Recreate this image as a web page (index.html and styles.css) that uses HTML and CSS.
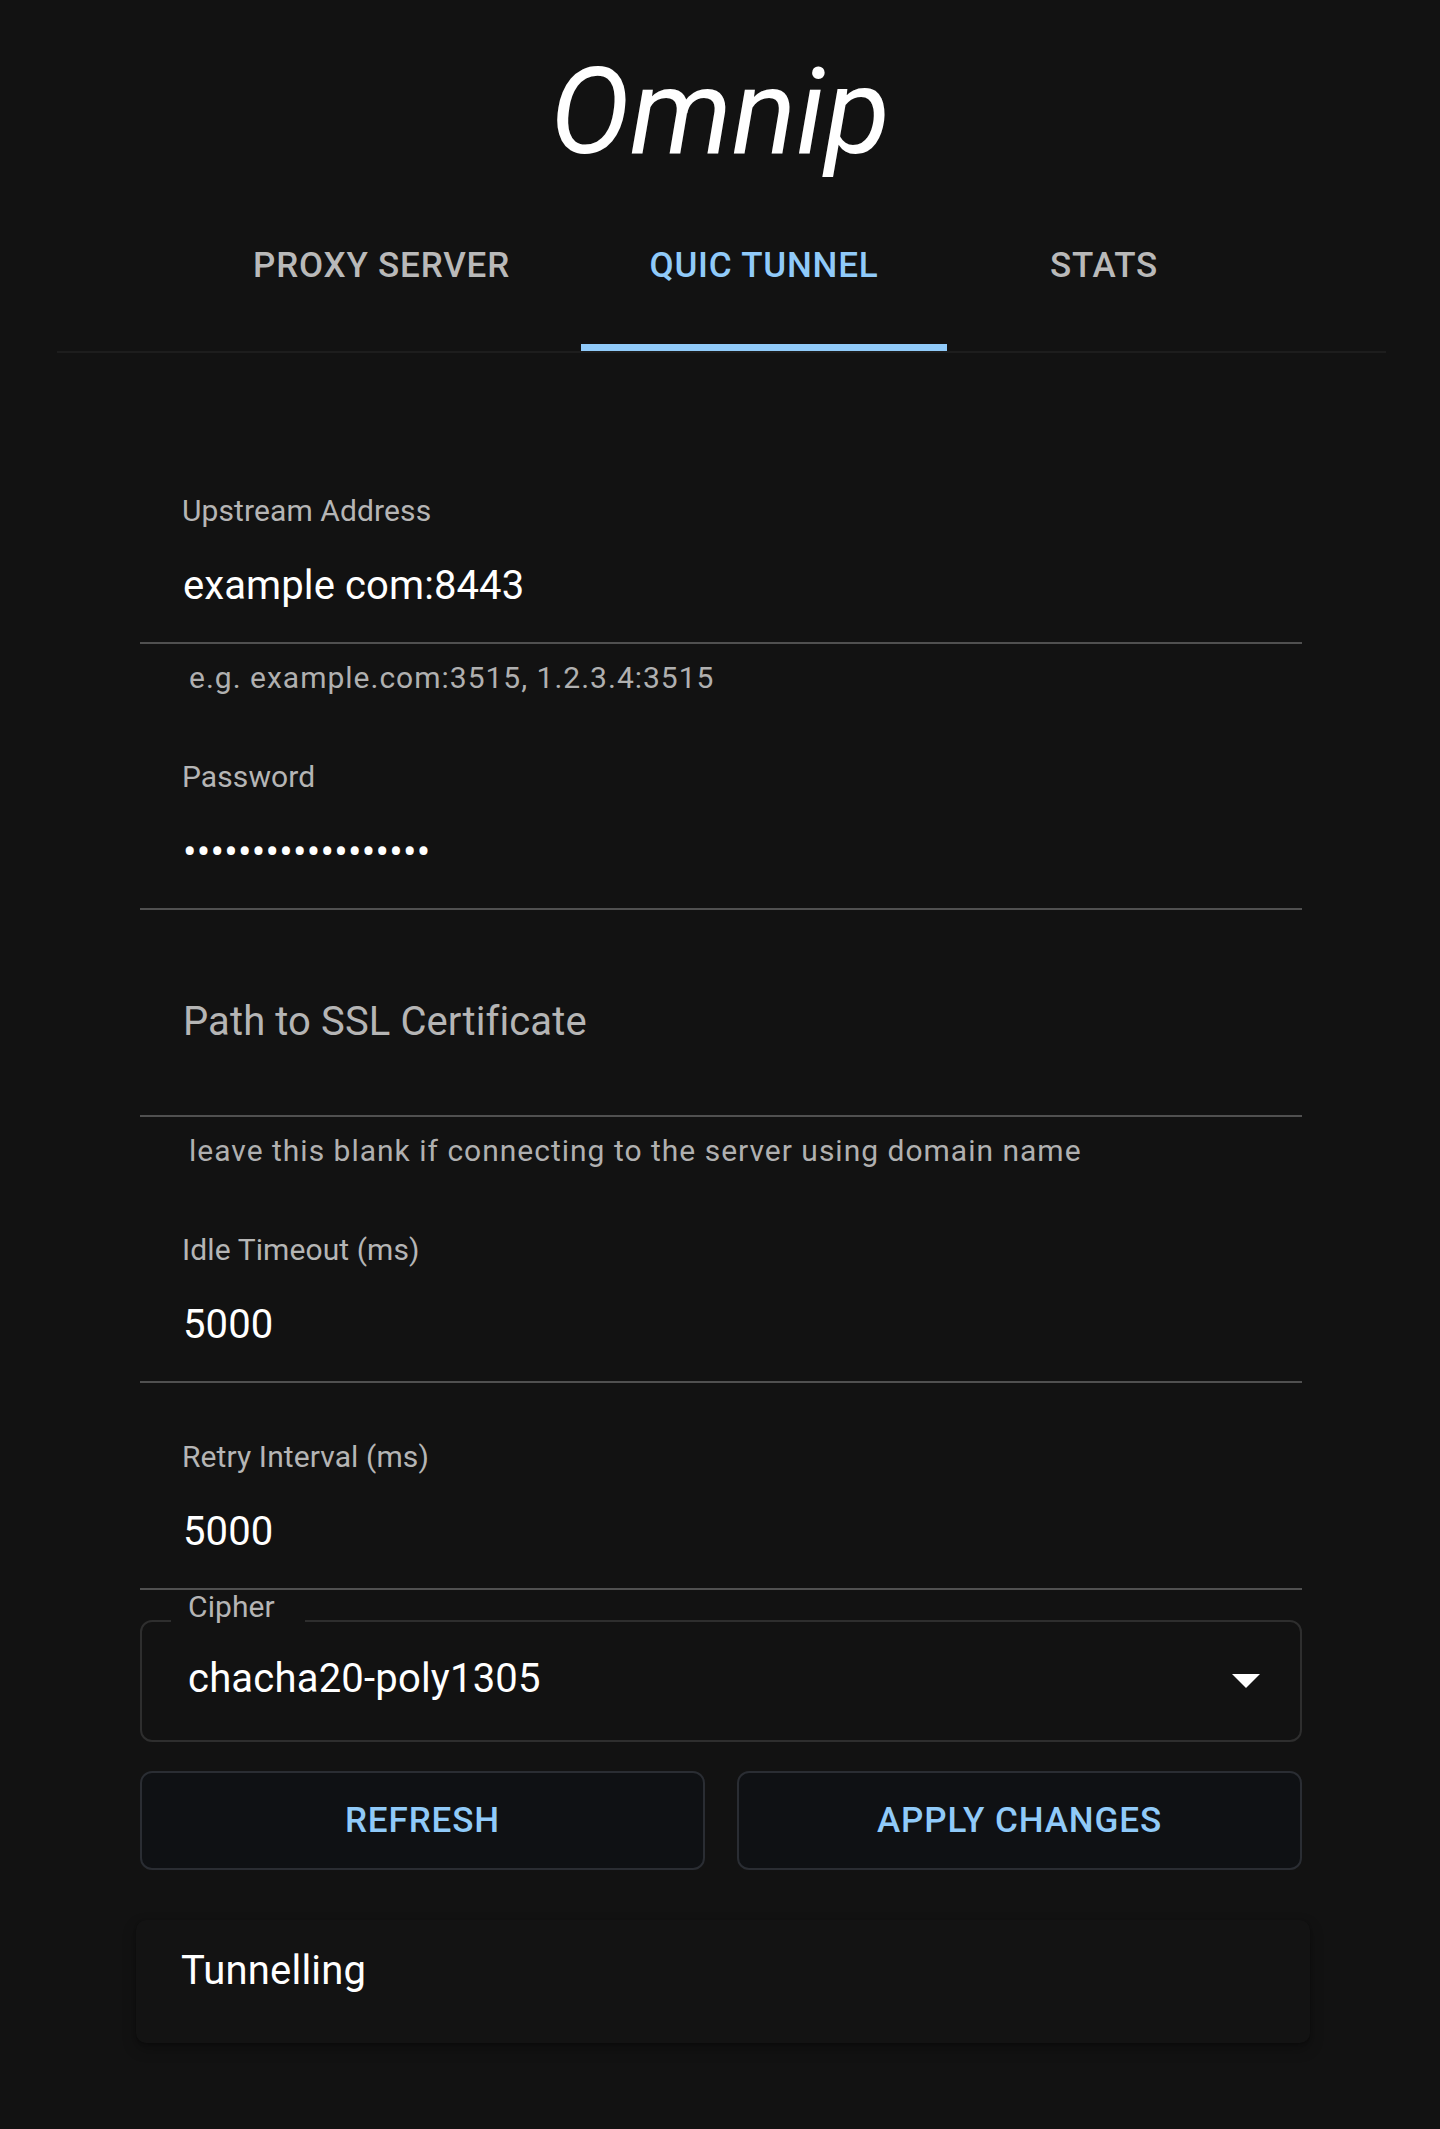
FILE: index.html
```html
<!DOCTYPE html>
<html lang="en">
<head>
<meta charset="utf-8">
<title>Omnip</title>
<link rel="stylesheet" href="styles.css">
</head>
<body>
<div class="page">
  <h1 class="title">Omnip</h1>

  <div class="tabs-bar">
    <nav class="tabs">
      <button class="tab">Proxy Server</button>
      <button class="tab tab-active">QUIC Tunnel</button>
      <button class="tab">Stats</button>
    </nav>
  </div>

  <main class="form">
    <div class="field">
      <label class="field-label">Upstream Address</label>
      <div class="field-value">example com:8443</div>
    </div>
    <p class="helper">e.g. example.com:3515, 1.2.3.4:3515</p>

    <div class="field">
      <label class="field-label">Password</label>
      <div class="field-value field-secret">••••••••••••••••••</div>
    </div>

    <div class="field field-empty">
      <label class="field-placeholder">Path to SSL Certificate</label>
    </div>
    <p class="helper">leave this blank if connecting to the server using domain name</p>

    <div class="field">
      <label class="field-label">Idle Timeout (ms)</label>
      <div class="field-value">5000</div>
    </div>

    <div class="field">
      <label class="field-label">Retry Interval (ms)</label>
      <div class="field-value">5000</div>
    </div>

    <div class="select">
      <span class="select-label">Cipher</span>
      <div class="select-value">chacha20-poly1305</div>
      <svg class="select-arrow" width="28" height="14" viewBox="0 0 28 14" aria-hidden="true"><path d="M0 0H28L14 14Z" fill="#ffffff"/></svg>
    </div>

    <div class="actions">
      <button class="btn">Refresh</button>
      <button class="btn">Apply Changes</button>
    </div>

    <section class="card">
      <div class="card-title">Tunnelling</div>
    </section>
  </main>
</div>
</body>
</html>
```

FILE: styles.css
```css
* {
  box-sizing: border-box;
}

html,
body {
  margin: 0;
  background: #121212;
}

body {
  font-family: Roboto, "Liberation Sans", Arial, sans-serif;
  color: #ffffff;
  min-height: 2129px;
}

.page {
  padding-top: 52px;
  padding-bottom: 60px;
}

.title {
  margin: 0 0 8px;
  text-align: center;
  font-size: 120px;
  line-height: 120px;
  font-weight: 400;
  font-style: italic;
  letter-spacing: 0;
  color: #ffffff;
}

.tabs-bar {
  margin: 0 54px 0 57px;
  border-bottom: 2px solid #1d1d1d;
}

.tabs {
  display: grid;
  grid-template-columns: 399px 366px 314px;
  justify-content: center;
}

.tab {
  height: 171px;
  padding: 0;
  border: 0;
  background: transparent;
  font-family: inherit;
  font-size: 35px;
  line-height: 35px;
  font-weight: 500;
  letter-spacing: 0.8px;
  text-transform: uppercase;
  color: #b9b9b9;
  display: flex;
  align-items: center;
  justify-content: center;
}

.tab-active {
  color: #90caf9;
  box-shadow: inset 0 -7px 0 #90caf9;
}

.form {
  margin: 0 138px 0 140px;
  padding-top: 143px;
  display: flex;
  flex-direction: column;
}

.field {
  display: flex;
  flex-direction: column;
  border-bottom: 2px solid #505050;
}

.field + .field {
  margin-top: 59px;
}

.field-label {
  display: block;
  padding: 0 41px 0 42px;
  font-size: 30px;
  line-height: 30px;
  letter-spacing: 0.1px;
  color: #b5b5b5;
  margin-bottom: 40px;
}

.field-value {
  padding: 0 41px 0 43px;
  font-size: 40px;
  line-height: 40px;
  letter-spacing: 0.1px;
  color: #ffffff;
  margin-bottom: 36px;
  white-space: nowrap;
}

.field-secret {
  margin-top: 1px;
  margin-bottom: 35px;
  letter-spacing: 0.25px;
}

.field-empty {
  padding-top: 33px;
}

.field-placeholder {
  display: block;
  padding: 0 41px 0 43px;
  font-size: 40px;
  line-height: 40px;
  letter-spacing: 0.1px;
  color: #b5b5b5;
  margin-bottom: 73px;
}

.helper {
  margin: 19px 0 0;
  padding-left: 49px;
  font-size: 30px;
  line-height: 30px;
  letter-spacing: 1px;
  color: #b0b0b0;
}

.helper + .field {
  margin-top: 69px;
}

.select {
  position: relative;
  margin-top: 30px;
  height: 122px;
  border: 2px solid #2e2e2e;
  border-radius: 12px;
  display: flex;
  align-items: center;
  padding: 0 40px 0 46px;
}

.select-label {
  position: absolute;
  top: -30px;
  left: 29px;
  padding: 0 30px 2px 17px;
  background: #121212;
  font-size: 30px;
  line-height: 30px;
  letter-spacing: 0.1px;
  color: #b5b5b5;
}

.select-value {
  flex: 1;
  padding-bottom: 4px;
  font-size: 40px;
  line-height: 40px;
  letter-spacing: 0.2px;
  color: #ffffff;
}

.select-arrow {
  display: block;
  flex: none;
}

.actions {
  margin-top: 29px;
  display: grid;
  grid-template-columns: 1fr 1fr;
  gap: 32px;
}

.btn {
  height: 99px;
  border: 2px solid #2a2d33;
  border-radius: 12px;
  background: #0f1114;
  font-family: inherit;
  font-size: 35px;
  line-height: 35px;
  font-weight: 500;
  letter-spacing: 0.9px;
  text-transform: uppercase;
  color: #90caf9;
  display: flex;
  align-items: center;
  justify-content: center;
}

.card {
  margin: 50px -8px 0 -4px;
  padding: 31px 45px 52px;
  background: #131313;
  border-radius: 10px;
  box-shadow: 0 6px 14px rgba(0, 0, 0, 0.28), 0 1px 3px rgba(0, 0, 0, 0.25);
}

.card-title {
  font-size: 40px;
  line-height: 40px;
  letter-spacing: 0.2px;
  color: #ffffff;
}
```
